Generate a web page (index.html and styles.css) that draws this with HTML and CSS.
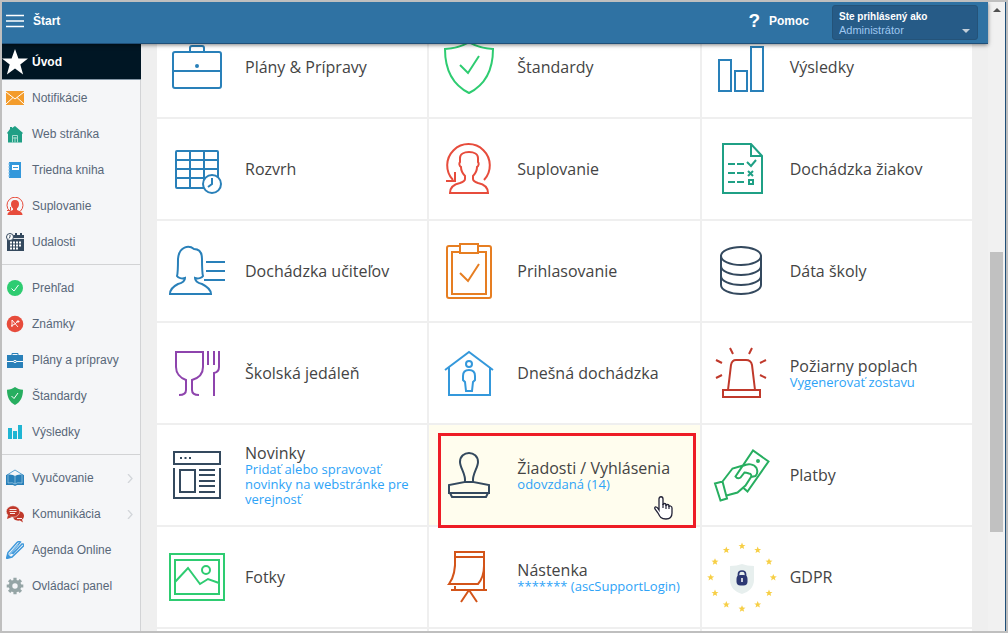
FILE: index.html
```html
<!DOCTYPE html>
<html lang="sk">
<head>
<meta charset="utf-8">
<meta name="viewport" content="width=device-width, initial-scale=1">
<title>Štart</title>
<link rel="stylesheet" href="styles.css">
</head>
<body>
<div class="window">
  <div class="app">
    <header class="topbar">
      <button class="menu-button" type="button" aria-label="Menu">
        <svg width="18" height="14" viewBox="0 0 18 14"><path d="M0 1.500h18M0 7h18M0 12.500h18" stroke="#fff" stroke-width="1.500"/></svg>
      </button>
      <span class="topbar-title">Štart</span>
      <a class="help" href="#"><span class="help-mark">?</span>Pomoc</a>
      <div class="user">
        <label class="user-label" for="account">Ste prihlásený ako</label>
        <select class="user-select" id="account"><option>Administrátor</option></select>
        <svg class="user-arrow" width="8" height="4" viewBox="0 0 8 4"><path d="M0 0h8L4 4z" fill="#c3cfda"/></svg>
      </div>
    </header>
    <div class="body">
      <nav class="sidebar">
        <a class="nav-item nav-active" href="#"><svg class="nav-icon nav-star" viewBox="0 0 26 26"><path d="M13 0l3.400 9.400H26l-7.700 6 2.800 10L13 19.600l-8.100 5.800 2.800-10L0 9.400h9.600z" fill="#fff"/></svg>Úvod</a>
        <a class="nav-item" href="#"><svg class="nav-icon" viewBox="0 0 18 18"><path d="M0 2h18v14H0z" fill="#f39c2c"/><path d="M0 3l9 7 9-7M0 15l7-6.500M18 15l-7-6.500" fill="none" stroke="#fff" stroke-width="1"/></svg>Notifikácie</a>
        <a class="nav-item" href="#"><svg class="nav-icon" viewBox="0 0 18 18"><path d="M1 8l3-4V2h2v1l3-2 8 7-1 1v8.500H2V9z" fill="#1f9f85"/><path d="M6.500 17.500v-7h5v7M9 12v5.500M6.500 13h5" fill="none" stroke="#a9dccf" stroke-width="1"/></svg>Web stránka</a>
        <a class="nav-item" href="#"><svg class="nav-icon" viewBox="0 0 18 18"><path d="M3 1h12v16H3z" fill="#3498db"/><path d="M2 3h2M2 6h2M2 9h2M2 12h2M2 15h2" stroke="#8fc6ec" stroke-width="1"/><path d="M6 4h7v5H6z" fill="#fff"/><path d="M7 6.500h5" stroke="#3498db"/></svg>Triedna kniha</a>
        <a class="nav-item" href="#"><svg class="nav-icon" viewBox="0 0 18 18"><path d="M3.500 14A8 8 0 1 1 14.500 14" fill="none" stroke="#e74c3c"/><path d="M1 13.500h3.500V10" fill="none" stroke="#e74c3c"/><path d="M9 3c3 0 4 2 4 4s-.5 3-2 4.500V13c2 1 5.500 1.500 5.500 5h-15c0-3.500 3.500-4 5.500-5v-1.500C5.500 10 5 9 5 7s1-4 4-4z" fill="#e74c3c"/></svg>Suplovanie</a>
        <a class="nav-item" href="#"><svg class="nav-icon" viewBox="0 0 18 18"><path d="M1 2h17v16H1z" fill="#34495e"/><path d="M7 5.500h11" stroke="#dfe3e7"/><path d="M4 9.500h11M4 12.500h11M4 15.500h8" stroke="#fff" stroke-width="2" stroke-dasharray="2 1"/><path d="M10 0v4M15 0v4" stroke="#34495e" stroke-width="2"/><circle cx="4" cy="4" r="3.500" fill="#fff" stroke="#34495e"/><path d="M4 2v2L3 5.500" fill="none" stroke="#34495e"/></svg>Udalosti</a>
        <hr class="nav-rule">
        <a class="nav-item" href="#"><svg class="nav-icon" viewBox="0 0 18 18"><circle cx="9" cy="9" r="8" fill="#2ecc71"/><path d="M5.500 9.500L8 12l4.500-6" fill="none" stroke="#fff"/></svg>Prehľad</a>
        <a class="nav-item" href="#"><svg class="nav-icon" viewBox="0 0 18 18"><circle cx="9" cy="9" r="8.300" fill="#e74c3c"/><path d="M6 12V5l6 7M5 11l4-2 2-2M12 5v3M10.500 6.500h3" fill="none" stroke="#fff" stroke-width=".9"/></svg>Známky</a>
        <a class="nav-item" href="#"><svg class="nav-icon" viewBox="0 0 18 18"><path d="M1 4h16v13H1z" fill="#2980b9"/><path d="M6 4V2.500h6V4" fill="none" stroke="#2980b9"/><path d="M1 10.500h6.500M10.500 10.500H17" stroke="#fff"/><ellipse cx="9" cy="10.500" rx="1.500" ry="1" fill="none" stroke="#fff"/></svg>Plány a prípravy</a>
        <a class="nav-item" href="#"><svg class="nav-icon" viewBox="0 0 18 18"><path d="M9 0c2 1.700 5 2.600 8 2.700C17 10 14.500 15 9 18 3.500 15 1 10 1 2.700 4 2.600 7 1.700 9 0z" fill="#27ae60"/><path d="M5.500 9L8 11.500l4-5.500" fill="none" stroke="#fff"/></svg>Štandardy</a>
        <a class="nav-item" href="#"><svg class="nav-icon" viewBox="0 0 18 18"><path d="M2 5h4v11H2zM7 8h4v8H7zM12 2h4v14h-4z" fill="#1fb5d3"/></svg>Výsledky</a>
        <hr class="nav-rule">
        <a class="nav-item" href="#"><svg class="nav-icon" viewBox="0 0 18 18"><path d="M1 6l8-5 8 5" fill="none" stroke="#5ba3d2"/><path d="M0 6l2-.5q5-.5 7 1.500 2-2 7-1.500l2 .5v10h-7l-2 1-2-1H0z" fill="#2980b9"/><path d="M9 7v8M2 6v8q5-1 7 1 2-2 7-1V6" fill="none" stroke="#a5cde7" stroke-width=".7"/></svg>Vyučovanie<svg class="nav-more" width="6" height="9" viewBox="0 0 6 9"><path d="M1 0l4 4.500L1 9" fill="none" stroke="#d3d6da" stroke-width="1.300"/></svg></a>
        <a class="nav-item" href="#"><svg class="nav-icon" viewBox="0 0 18 18"><path d="M12 6c4 0 6 2.500 6 5 0 1.500-1 3-2 3.500l1 3-3-2c-4 .7-7-1-7-4.500z" fill="#c0392b"/><ellipse cx="7" cy="6.500" rx="6.700" ry="5.700" fill="#c0392b" stroke="#f5f6f8" stroke-width=".5"/><path d="M2 10l-1 4 5-2z" fill="#c0392b"/><path d="M3.500 4.500h7M3.500 6.500h7M4 8.500h5M11 13.500h5" stroke="#fff" stroke-width=".9"/></svg>Komunikácia<svg class="nav-more" width="6" height="9" viewBox="0 0 6 9"><path d="M1 0l4 4.500L1 9" fill="none" stroke="#d3d6da" stroke-width="1.300"/></svg></a>
        <a class="nav-item" href="#"><svg class="nav-icon" viewBox="0 0 18 18"><path d="M.5 17.500L2 11.500 11 1.500Q13 0 14.500 1L5 12.500M.5 17.500L6 16 17.500 5Q18.500 2.500 16 3L6.500 13" fill="none" stroke="#3d97da" stroke-width="1.500"/><path d="M0 18l2-5 3 3z" fill="#3d97da"/><path d="M3.500 13.500l8.500-10" stroke="#7dbdec" stroke-width="1.500"/></svg>Agenda Online</a>
        <a class="nav-item" href="#"><svg class="nav-icon" viewBox="0 0 18 18"><circle cx="9" cy="9" r="4.500" fill="none" stroke="#95a5a6" stroke-width="3.600"/><path d="M9 .7v2.800M9 14.500v2.800M.7 9h2.800M14.500 9h2.800M3.100 3.100l2 2M12.900 12.900l2 2M3.100 14.900l2-2M12.900 5.100l2-2" stroke="#95a5a6" stroke-width="3.200"/></svg>Ovládací panel</a>
      </nav>
      <main class="content">
        <div class="grid">
          <a class="tile" href="#"><svg class="tile-icon blue" viewBox="0 0 80 80"><rect x="16" y="25" width="48" height="36" rx="2"/><path d="M33 25v-4q0-2 2-2h10q2 0 2 2v4M16 44h48"/><circle cx="40" cy="39" r="1" fill="#2980b9"/></svg><span class="tile-text"><span class="tile-title">Plány &amp; Prípravy</span></span></a>
          <a class="tile" href="#"><svg class="tile-icon green" viewBox="0 0 80 80"><path d="M16 22Q31 21 40 15 49 21 64 22C64 45 54 59 40 66 26 59 16 45 16 22zM31 38l8 8 11-17"/></svg><span class="tile-text"><span class="tile-title">Štandardy</span></span></a>
          <a class="tile" href="#"><svg class="tile-icon blue" viewBox="0 0 80 80"><path d="M17 33h12v31H17zM33 44h12v20H33zM49 20h12v44H49z"/></svg><span class="tile-text"><span class="tile-title">Výsledky</span></span></a>

          <a class="tile" href="#"><svg class="tile-icon blue" viewBox="0 0 80 80"><rect x="19" y="22" width="42" height="37" rx="1"/><path d="M33 22v37M47 22v37M19 31h42M19 40h42M19 49h42"/><circle cx="55" cy="55" r="9" fill="#fff"/><path d="M55 49v6l-4 3"/></svg><span class="tile-text"><span class="tile-title">Rozvrh</span></span></a>
          <a class="tile" href="#"><svg class="tile-icon red" viewBox="0 0 80 80"><path d="M24 51A21.300 21.300 0 1 1 55 51M26 43v9h-9"/><path d="M21 64h38c0-6-5-9-10-10-3-1-5-2-5-4v-3c3-3 4-6 4-9 2-1 2-4 1-5v-4c0-4-4-6-9-6s-9 2-9 6v4c-1 1-1 4 1 5 0 3 1 6 4 9v3c0 2-2 3-5 4-5 1-10 4-10 10z"/></svg><span class="tile-text"><span class="tile-title">Suplovanie</span></span></a>
          <a class="tile" href="#"><svg class="tile-icon teal" viewBox="0 0 80 80"><path d="M21 15h28l11 12v37H21zM49 15v12h11M26 35h7M35 35h7M26 44h7M35 44h7M26 53h7M35 53h7M45 33l4 4 5-6M46 42l5 5M51 42l-5 5M47 51h4v4h-4z"/></svg><span class="tile-text"><span class="tile-title">Dochádzka žiakov</span></span></a>

          <a class="tile" href="#"><svg class="tile-icon blue" viewBox="0 0 80 80"><path d="M13 63h41c0-5-5-8-9-10-4-1-7-3-7-6 3 1 7 0 8-2-1-3-1-7-1-17 0-7-3-10-8-10-5-4-15-3-16 10 0 10 0 14-1 17 1 2 5 3 8 2 0 3-3 5-7 6-4 2-8 5-8 10zM49 31h19M49 40h19M47 49h21"/></svg><span class="tile-text"><span class="tile-title">Dochádzka učiteľov</span></span></a>
          <a class="tile" href="#"><svg class="tile-icon orange" viewBox="0 0 80 80"><rect x="18" y="15" width="44" height="52" rx="2"/><path d="M23 21h34v42H23z"/><path d="M31 13h18v9H31z" fill="#fff"/><path d="M31 42l8 8 11-17"/></svg><span class="tile-text"><span class="tile-title">Prihlasovanie</span></span></a>
          <a class="tile" href="#"><svg class="tile-icon navy" viewBox="0 0 80 80"><ellipse cx="39" cy="25" rx="20" ry="9"/><path d="M19 25v29c0 5 9 9 20 9s20-4 20-9V25M19 35c0 5 9 9 20 9s20-4 20-9M19 45c0 5 9 9 20 9s20-4 20-9"/></svg><span class="tile-text"><span class="tile-title">Dáta školy</span></span></a>

          <a class="tile" href="#"><svg class="tile-icon purple" viewBox="0 0 80 80"><path d="M22 62q7 0 7-5V47c-6-2-10-7-10-13V19h27v15c0 6-4 11-11 13v10q0 5 7 5M51 18v14M57 18v14M62 18v16q0 5-5 6v23"/></svg><span class="tile-text"><span class="tile-title">Školská jedáleň</span></span></a>
          <a class="tile" href="#"><svg class="tile-icon sky" viewBox="0 0 80 80"><path d="M16 37l24-18 24 18M20 34v28h41V34M37 58l-1-9-2-2v-4q0-6 6-6t6 6v4l-2 2-1 9z"/><circle cx="40" cy="31" r="3"/></svg><span class="tile-text"><span class="tile-title">Dnešná dochádzka</span></span></a>
          <a class="tile" href="#"><svg class="tile-icon crimson" viewBox="0 0 80 80"><path d="M21 57h37v7H21zM26 57l3-25q1-5 5-5h10q5 0 6 5l3 25M28 15l3 6M50 15l-3 6M14 27l6 3M14 45l6-3M64 27l-6 3M64 45l-6-3"/></svg><span class="tile-text"><span class="tile-title">Požiarny poplach</span><span class="tile-sub">Vygenerovať zostavu</span></span></a>

          <a class="tile" href="#"><svg class="tile-icon navy" viewBox="0 0 80 80"><path d="M17 17h46v12H17zM17 33v30h46V33M23 35h15v22H23zM42 35h16M42 40h16M42 46h16M42 51h16M42 57h16"/><path d="M23 23h11" stroke-dasharray="2 2.500"/></svg><span class="tile-text"><span class="tile-title">Novinky</span><span class="tile-sub">Pridať alebo spravovať novinky na webstránke pre verejnosť</span></span></a>
          <a class="tile tile-hover" href="#"><svg class="tile-icon navy" viewBox="0 0 80 80"><path d="M36 47c1-8-5-14-5-20 0-12 18-12 18 0 0 6-6 12-5 20l16 3v8H20v-8zM36 47h8M21 58l2 4h34l2-4"/></svg><span class="tile-text"><span class="tile-title">Žiadosti / Vyhlásenia</span><span class="tile-sub">odovzdaná (14)</span></span><span class="marker"></span><svg class="pointer" width="19" height="24" viewBox="0 0 19 24"><path d="M5 14V3c0-3 4-3 4 0v6c0-2 3-2 3 0v1c0-2 3-2 3 0v1c0-2 3-1 3 1v5c0 4-2 6-6 6-5 0-6-2-8-6l-3-4c-1-2 1-4 4 1z" fill="#fff" stroke="#222236" stroke-width="1.300"/><path d="M9 8v4M12 9v4M15 10v3" stroke="#222236" stroke-width="1.200"/></svg></a>
          <a class="tile" href="#"><svg class="tile-icon emerald" viewBox="0 0 80 80"><path d="M13 48.500l7.500-2L25 63.500l-6.500 2zM20.500 46.500l10-13L41 30.500M24.500 60.500l11-3 8-7L49 42q1-3-2-3.500-3-1-4.500-1l-4 5q-3 2-5-1L51 15.500l15.500 11-21 30-4-3.500M41 31c5-3 11-2 13.500 2q2 5-1 8l-4.500 1"/><circle cx="56" cy="26" r="1" fill="#27ae60"/></svg><span class="tile-text"><span class="tile-title">Platby</span></span></a>

          <a class="tile" href="#"><svg class="tile-icon green" viewBox="0 0 80 80"><path d="M13 17h54v46H13zM18 23h44v34H18zM18 45l13-14 12 16 8-5 11 4"/><circle cx="49" cy="33" r="4"/></svg><span class="tile-text"><span class="tile-title">Fotky</span></span></a>
          <a class="tile" href="#"><svg class="tile-icon rust" viewBox="0 0 80 80"><path d="M26 15h29v5H26zM26 20q1 18-6 27h29q6-7 6-18M55 20v33M22 53h36M26 49v4M40 53l-8 12M40 53l8 12"/></svg><span class="tile-text"><span class="tile-title">Nástenka</span><span class="tile-sub">******* (ascSupportLogin)</span></span></a>
          <a class="tile" href="#"><svg class="tile-icon" viewBox="0 0 80 80"><defs><path id="star" d="M0-3.500l1 2.400 2.500.1-2 1.600.7 2.500L0 1.700l-2.200 1.400.7-2.500-2-1.600 2.500-.1z" fill="#f7cf46"/></defs><use href="#star" x="40" y="9"/><use href="#star" x="55.700" y="13"/><use href="#star" x="67" y="24.700"/><use href="#star" x="71.300" y="40.400"/><use href="#star" x="67" y="56"/><use href="#star" x="55.700" y="67.500"/><use href="#star" x="40" y="71.700"/><use href="#star" x="24.300" y="67.500"/><use href="#star" x="13" y="56"/><use href="#star" x="8.700" y="40.400"/><use href="#star" x="13" y="24.700"/><use href="#star" x="24.300" y="13"/><path d="M28 29q7 0 12-2 5 2 12 2v14c0 7-5 12-12 14-7-2-12-7-12-14z" fill="#e7efee"/><path d="M36.500 40v-3c0-4 7-4 7 0v3" fill="none" stroke="#2c3873" stroke-width="1.700"/><rect x="34.500" y="38" width="11" height="10.500" rx="4" fill="#2c3873"/><path d="M40 41v4" stroke="#fff" stroke-width="1.500"/></svg><span class="tile-text"><span class="tile-title">GDPR</span></span></a>

          <div class="tile"></div>
          <div class="tile"></div>
          <div class="tile"></div>
        </div>
      </main>
    </div>
  </div>
  <div class="scrollbar">
    <svg class="scroll-arrow" width="8" height="4" viewBox="0 0 8 4"><path d="M0 4h8L4 0z" fill="#505050"/></svg>
    <div class="scroll-track"><div class="scroll-thumb"></div></div>
  </div>
</div>
</body>
</html>
```
FILE: styles.css
```css
* {
  box-sizing: border-box;
}

body {
  margin: 0;
  font-family: "Liberation Sans", Arial, sans-serif;
  font-size: 12px;
  background: #bfbfbf;
}

a {
  color: inherit;
  text-decoration: none;
}

.window {
  display: flex;
  height: 100vh;
  overflow: hidden;
  border: 2px solid #bfbfbf;
}

.app {
  flex: 1;
  min-width: 0;
  display: flex;
  flex-direction: column;
}

/* Top bar */
.topbar {
  position: relative;
  z-index: 2;
  flex: none;
  height: 42px;
  display: flex;
  align-items: center;
  padding: 0 10px 4px 4px;
  color: #fff;
  font-weight: bold;
  background: #2f72a3;
  border-bottom: 1px solid #1f4f78;
  box-shadow: 0 1px 4px rgba(0, 0, 0, 0.5);
}

.menu-button {
  display: flex;
  padding: 0;
  border: 0;
  background: none;
}

.topbar-title {
  flex: 1;
  margin-left: 9px;
}

.help {
  display: flex;
  align-items: center;
  gap: 9px;
  margin-right: 23px;
}

.help-mark {
  font-size: 19px;
}

.user {
  position: relative;
  align-self: flex-start;
  width: 146px;
  height: 35px;
  margin-top: 3px;
  padding: 4px 6px;
  border: 1px solid #245379;
  border-radius: 3px;
  background: #265b87;
}

.user-label {
  display: block;
  font-size: 10px;
  line-height: 13px;
}

.user-select {
  display: block;
  width: 100%;
  height: 14px;
  padding: 0;
  border: 0;
  appearance: none;
  background: none;
  color: #9ec7f0;
  font: 11px/14px "Liberation Sans", Arial, sans-serif;
}

.user-arrow {
  position: absolute;
  right: 7px;
  bottom: 6px;
}

.body {
  flex: 1;
  min-height: 0;
  display: flex;
}

/* Side navigation */
.sidebar {
  flex: none;
  width: 139px;
  color: #586778;
  background: #f5f6f8;
  border-right: 1px solid #d2d3d5;
}

.nav-item {
  display: flex;
  align-items: center;
  height: 36px;
  padding-left: 4px;
}

.nav-icon {
  flex: none;
  width: 18px;
  height: 18px;
  margin-right: 8px;
}

.nav-active {
  margin-right: -1px;
  padding-left: 0;
  color: #fff;
  font-weight: bold;
  background: #001624;
  border-bottom: 1px solid #8496a5;
}

.nav-star {
  width: 26px;
  height: 26px;
  margin-right: 4px;
}

.nav-more {
  margin-left: auto;
  margin-right: 7px;
}

.nav-rule {
  margin: 4px 0 5px;
  border: 0;
  border-top: 1px solid #d2d3d5;
}

/* Module tiles */
.content {
  flex: 1;
  min-width: 0;
  overflow: hidden;
  padding: 0 16px;
  background: #efefef;
}

.grid {
  display: grid;
  grid-template-columns: repeat(3, 1fr);
  grid-auto-rows: 100px;
  gap: 2px;
  margin-top: -27px;
}

.tile {
  position: relative;
  display: flex;
  align-items: center;
  gap: 8px;
  padding-right: 8px;
  background: #fff;
}

.tile-hover {
  background: #fffdee;
}

.tile-icon {
  flex: none;
  width: 80px;
  height: 80px;
  fill: none;
  stroke-width: 2;
}

.blue { stroke: #2980b9; }
.green { stroke: #2ecc71; }
.red { stroke: #e74c3c; }
.teal { stroke: #1fa085; }
.orange { stroke: #e67e22; }
.navy { stroke: #34495e; }
.purple { stroke: #8e44ad; }
.sky { stroke: #3498db; }
.crimson { stroke: #c0392b; }
.emerald { stroke: #27ae60; }
.rust { stroke: #d35419; }

.tile-text {
  font-family: "Open Sans", sans-serif;
}

.tile-title,
.tile-sub {
  display: block;
}

.tile-title {
  color: #444;
  font-size: 16px;
  line-height: 18px;
}

.tile-sub {
  color: #2ea3f7;
  font-size: 13px;
  line-height: 15px;
}

.marker {
  position: absolute;
  inset: 8px 4px -3px 9px;
  z-index: 1;
  border: 3px solid #ee1c25;
}

.pointer {
  position: absolute;
  right: 27px;
  bottom: 5px;
}

/* Scrollbar */
.scrollbar {
  flex: none;
  width: 18px;
  display: flex;
  flex-direction: column;
  align-items: center;
  background: #f1f1f1;
  border-right: 1px solid #1f4f78;
}

.scroll-arrow {
  margin: 6px 0;
}

.scroll-track {
  flex: 1;
  align-self: stretch;
  padding: 0 2px;
  display: grid;
  grid-template-rows: 38.200% 45.600%;
}

.scroll-thumb {
  grid-row: 2;
  background: #c1c1c1;
}
```
